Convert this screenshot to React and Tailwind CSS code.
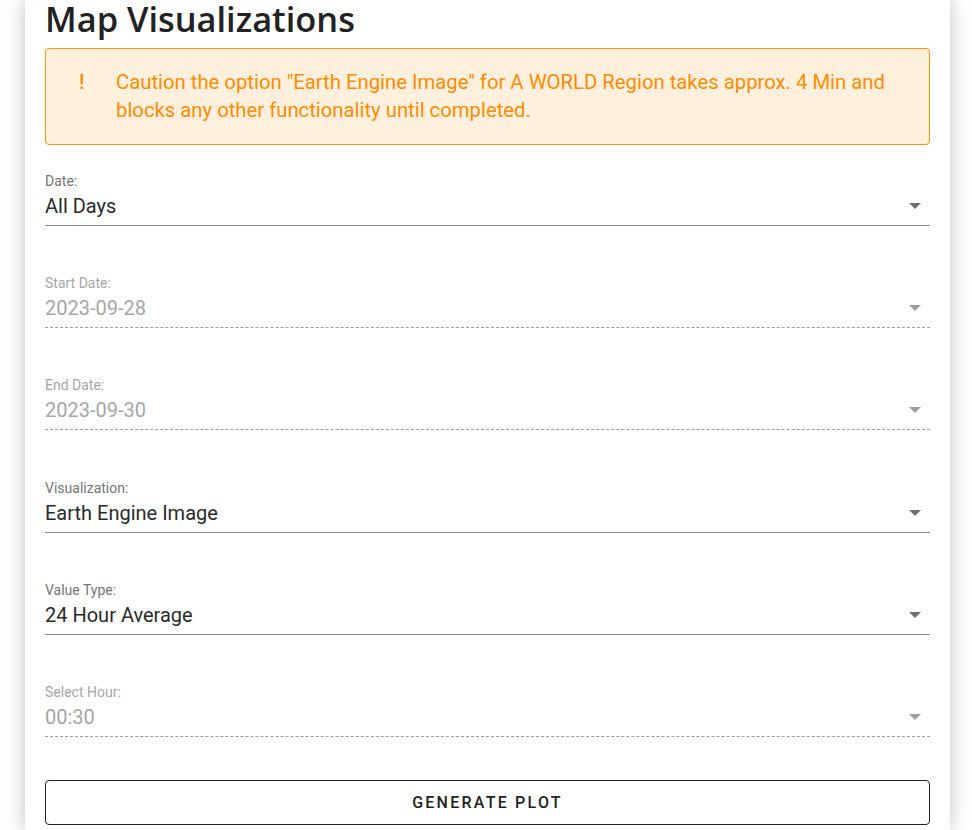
import React from 'react';

const fields = [
    { label: 'Date:', value: 'All Days', disabled: false },
    { label: 'Start Date:', value: '2023-09-28', disabled: true },
    { label: 'End Date:', value: '2023-09-30', disabled: true },
    { label: 'Visualization:', value: 'Earth Engine Image', disabled: false },
    { label: 'Value Type:', value: '24 Hour Average', disabled: false },
    { label: 'Select Hour:', value: '00:30', disabled: true },
];

const Caret = ({ disabled }) => (
    <svg width="12" height="6" viewBox="0 0 12 6" className="mr-[9px]">
        <path d="M0 0 L12 0 L6 6 Z" fill={disabled ? '#9e9e9e' : '#707070'} />
    </svg>
);

export default function App() {
    return (
        <div className="h-[830px] bg-white overflow-hidden" style={{ fontFamily: 'Roboto, "Liberation Sans", sans-serif' }}>
            <div className="ml-[25px] mr-[22px] bg-white shadow-[0_0_18px_rgba(0,0,0,0.25)] px-[20px] pb-[20px] h-[830px]">
                <h1
                    className="text-[34.4px] leading-[36px] text-[#222] pt-[1px]"
                    style={{ fontFamily: '"Open Sans", "Noto Sans", sans-serif', fontWeight: 600 }}
                >
                    Map Visualizations
                </h1>

                {/* warning */}
                <div className="mt-[11px] flex border border-[#ff9800] bg-[#fff0de] rounded-[4px] pl-[32px] pr-[20px] pt-[19px] pb-[20px] text-[#ff8c00]">
                    <span className="w-[38px] shrink-0 text-[21px] leading-[28px] pl-[1px] font-medium">!</span>
                    <p className="text-[20.3px] leading-[28px]">
                        Caution the option "Earth Engine Image" for A WORLD Region takes approx. 4 Min and blocks any other functionality until completed.
                    </p>
                </div>

                <div className="pt-[28px] flex flex-col gap-[49.2px]">
                    {fields.map((f) => (
                        <div key={f.label}>
                            <div className={`text-[14px] leading-[16px] ${f.disabled ? 'text-[#a6a6a6]' : 'text-[#757575]'}`}>{f.label}</div>
                            <div
                                className={`flex items-start justify-between h-[37px] pt-[5px] border-b ${
                                    f.disabled ? 'border-dashed border-[#9e9e9e] text-[#a6a6a6]' : 'border-solid border-[#8a8a8a] text-[#2a2a2a]'
                                }`}
                            >
                                <span className="text-[20px] leading-[24px]">{f.value}</span>
                                <span className="mt-[9px]">
                                    <Caret disabled={f.disabled} />
                                </span>
                            </div>
                        </div>
                    ))}
                </div>

                <button className="mt-[43px] w-full h-[45px] pt-[2px] border border-[#222] rounded-[4px] text-[16px] font-medium tracking-[0.14em] text-[#222] uppercase">
                    Generate Plot
                </button>
            </div>
        </div>
    );
}
